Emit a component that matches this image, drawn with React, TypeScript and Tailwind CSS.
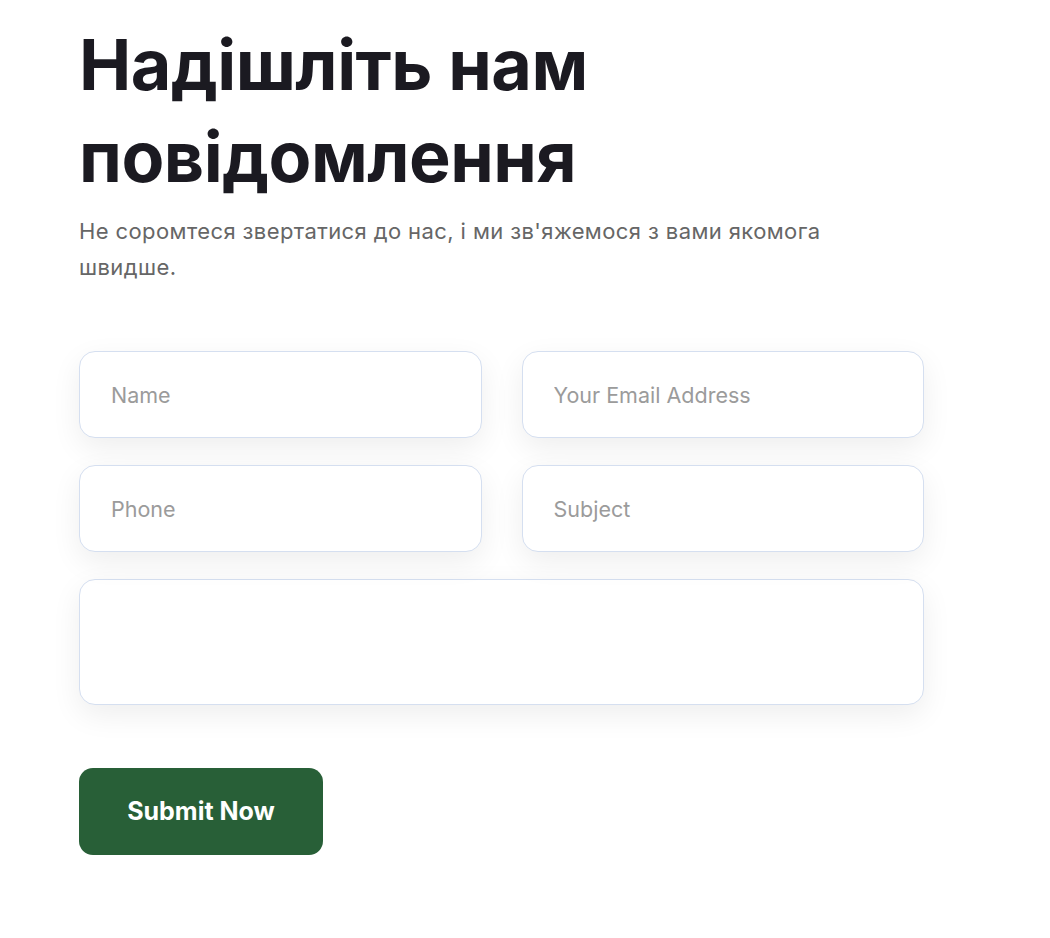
import React from "react";

export default function App() {
  const inputCls =
    "h-[87px] w-full rounded-[16px] border border-[#d5dff0] bg-white px-[31px] text-[21.5px] text-[#333] placeholder:text-[#9b9b9b] shadow-[0_10px_30px_rgba(0,0,0,0.07)] outline-none";
  return (
    <div
      className="min-h-[938px] w-[1050px] bg-white pl-[79px] pt-[19px]"
      style={{ fontFamily: "Inter, 'Noto Sans', sans-serif" }}
    >
      <h1 className="text-[70px] font-bold leading-[92px] tracking-[-0.5px] text-[#1b1a21]">
        Надішліть нам
        <br />
        повідомлення
      </h1>
      <p className="mt-[10px] w-[760px] text-[22px] leading-[36px] tracking-[0.4px] text-[#666666]">
        Не соромтеся звертатися до нас, і ми зв'яжемося з вами якомога швидше.
      </p>
      <form className="mt-[66px] w-[845px]">
        <div className="grid grid-cols-2 gap-x-[40px] gap-y-[27px]">
          <input className={inputCls} placeholder="Name" />
          <input className={inputCls} placeholder="Your Email Address" />
          <input className={inputCls} placeholder="Phone" />
          <input className={inputCls} placeholder="Subject" />
        </div>
        <textarea
          className="mt-[27px] block h-[126px] w-full resize-none rounded-[16px] border border-[#d5dff0] bg-white px-[31px] py-[20px] text-[21.5px] shadow-[0_10px_30px_rgba(0,0,0,0.07)] outline-none"
        />
        <button
          type="button"
          className="mt-[63px] h-[87px] w-[244px] rounded-[14px] bg-[#285f37] text-[25px] font-bold text-white"
        >
          Submit Now
        </button>
      </form>
    </div>
  );
}
